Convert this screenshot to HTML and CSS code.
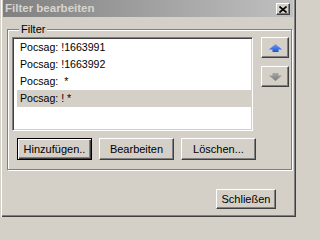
FILE: index.html
```html
<!DOCTYPE html>
<html>
<head>
<meta charset="utf-8">
<link rel="stylesheet" href="styles.css">
</head>
<body>
<div class="window">
  <div class="titlebar">
    <span class="title">Filter bearbeiten</span>
    <button class="close-x" aria-label="Schließen">
      <svg width="8" height="7" viewBox="0 0 8 7"><path d="M0.5 0.5 L7.5 6.5 M7.5 0.5 L0.5 6.5" stroke="#000" stroke-width="1.6" fill="none"/></svg>
    </button>
  </div>
  <div class="content">
    <div class="group">
      <div class="legend">Filter</div>
      <div class="group-row">
        <ul class="list">
          <li class="item">Pocsag: !1663991</li>
          <li class="item">Pocsag: !1663992</li>
          <li class="item">Pocsag:  *</li>
          <li class="item selected">Pocsag: ! *</li>
        </ul>
        <div class="arrows">
          <button class="btn arrow">
            <svg width="13" height="8" viewBox="0 0 13 8">
              <defs><linearGradient id="bl" x1="0" y1="0" x2="0" y2="1"><stop offset="0" stop-color="#6fa0f5"/><stop offset="1" stop-color="#1c4fd6"/></linearGradient></defs>
              <path d="M6.5 0 L13 5.5 L9.5 5.5 L9.5 8 L3.5 8 L3.5 5.5 L0 5.5 Z" fill="url(#bl)"/>
            </svg>
          </button>
          <button class="btn arrow">
            <svg width="13" height="8" viewBox="0 0 13 8">
              <defs><linearGradient id="gr" x1="0" y1="0" x2="0" y2="1"><stop offset="0" stop-color="#a8a8a8"/><stop offset="1" stop-color="#7c7c7c"/></linearGradient></defs>
              <path d="M3.5 0 L9.5 0 L9.5 2.5 L13 2.5 L6.5 8 L0 2.5 L3.5 2.5 Z" fill="url(#gr)"/>
            </svg>
          </button>
        </div>
      </div>
      <div class="actions">
        <button class="btn action default">Hinzufügen..</button>
        <button class="btn action">Bearbeiten</button>
        <button class="btn action">Löschen...</button>
      </div>
    </div>
    <div class="footer">
      <button class="btn close-btn">Schließen</button>
    </div>
  </div>
</div>
</body>
</html>
```

FILE: styles.css
```css
* { box-sizing: border-box; }
html, body { margin: 0; padding: 0; }
body {
  width: 296px;
  height: 217px;
  overflow: hidden;
  font-family: "Liberation Sans", Arial, sans-serif;
  font-size: 11px;
  color: #000;
  background: #d4d0c8;
}
.window {
  width: 296px;
  height: 217px;
  background: #d4d0c8;
  padding: 0 3px 3px 3px;
  box-shadow: inset 1px 0 0 #d4d0c8, inset 2px 0 0 #ffffff, inset -1px -1px 0 #404040, inset -2px -2px 0 #808080;
  display: flex;
  flex-direction: column;
}
.titlebar {
  height: 17px;
  background: linear-gradient(to right, #808080, #c0c0c0);
  display: flex;
  justify-content: space-between;
  align-items: flex-start;
  flex: none;
}
.title {
  font-weight: bold;
  font-size: 11.5px;
  line-height: 17px;
  color: #d8d5ce;
  padding-left: 2px;
  white-space: nowrap;
}
.close-x {
  width: 14px;
  height: 12px;
  margin: 3px 3px 0 0;
  padding: 0;
  background: #d4d0c8;
  border: 1px solid;
  border-color: #ffffff #404040 #404040 #ffffff;
  box-shadow: inset -1px -1px 0 #808080;
  display: flex;
  align-items: center;
  justify-content: center;
}
.close-x svg { display: block; }
.content {
  flex: 1;
  display: flex;
  flex-direction: column;
}
.group {
  margin: 12px 1px 0 4px;
  border: 1px solid #808080;
  box-shadow: inset 1px 1px 0 #ffffff, 1px 1px 0 #ffffff;
  padding: 0 2px 9px 4px;
}
.legend {
  width: fit-content;
  margin: -7px 0 0 7px;
  padding: 0 2px;
  line-height: 13px;
  background: #d4d0c8;
}
.group-row {
  margin-top: 1px;
  display: flex;
  gap: 8px;
}
.list {
  flex: 1;
  height: 94px;
  margin: 0;
  list-style: none;
  background: #ffffff;
  border: 1px solid;
  border-color: #808080 #ffffff #ffffff #808080;
  box-shadow: inset 1px 1px 0 #404040, inset -1px -1px 0 #d4d0c8;
  padding: 1px 1px 0 4px;
}
.item {
  height: 17px;
  line-height: 17px;
  padding-left: 3px;
  font-size: 10.6px;
  white-space: pre;
}
.item.selected { background: #d4d0c8; }
.arrows {
  width: 28px;
  display: flex;
  flex-direction: column;
  gap: 8px;
}
.btn {
  font-family: "Liberation Sans", Arial, sans-serif;
  font-size: 11px;
  color: #000;
  background: #d4d0c8;
  border: 1px solid;
  border-color: #ffffff #404040 #404040 #ffffff;
  box-shadow: inset -1px -1px 0 #808080;
  padding: 0;
  display: flex;
  align-items: center;
  justify-content: center;
}
.arrow { height: 21px; width: 28px; }
.arrow svg { display: block; }
.actions {
  margin: 7px 0 0 5px;
  display: flex;
  gap: 7px;
}
.action { width: 75px; height: 22px; }
.btn.default {
  border: 1px solid #000;
  box-shadow: inset 1px 1px 0 #ffffff, inset -1px -1px 0 #404040, inset -2px -2px 0 #808080;
}
.footer {
  margin-top: 19px;
  display: flex;
  justify-content: flex-end;
  padding-right: 17px;
}
.close-btn { width: 60px; height: 20px; }
```
